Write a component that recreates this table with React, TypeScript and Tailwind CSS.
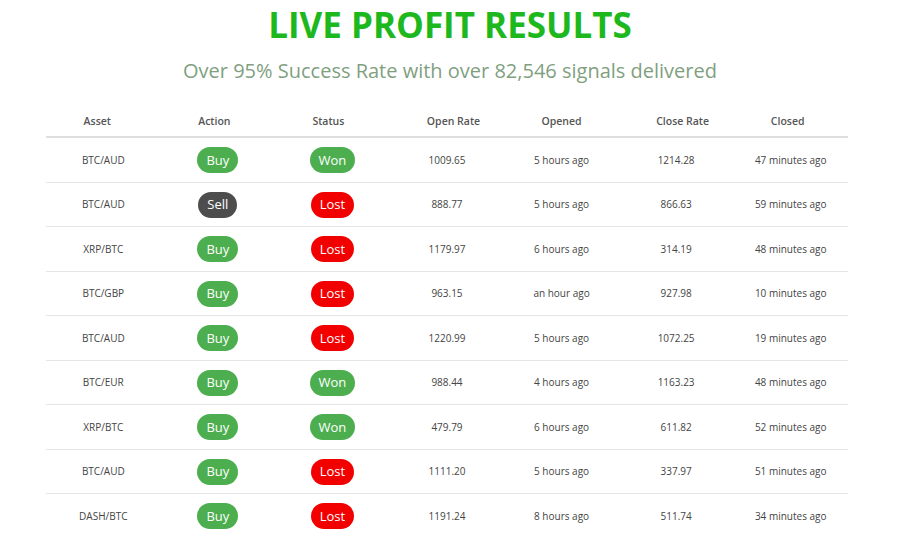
import React from "react";

type Row = [string, "Buy" | "Sell", "Won" | "Lost", string, string, string, string];

const rows: Row[] = [
  ["BTC/AUD", "Buy", "Won", "1009.65", "5 hours ago", "1214.28", "47 minutes ago"],
  ["BTC/AUD", "Sell", "Lost", "888.77", "5 hours ago", "866.63", "59 minutes ago"],
  ["XRP/BTC", "Buy", "Lost", "1179.97", "6 hours ago", "314.19", "48 minutes ago"],
  ["BTC/GBP", "Buy", "Lost", "963.15", "an hour ago", "927.98", "10 minutes ago"],
  ["BTC/AUD", "Buy", "Lost", "1220.99", "5 hours ago", "1072.25", "19 minutes ago"],
  ["BTC/EUR", "Buy", "Won", "988.44", "4 hours ago", "1163.23", "48 minutes ago"],
  ["XRP/BTC", "Buy", "Won", "479.79", "6 hours ago", "611.82", "52 minutes ago"],
  ["BTC/AUD", "Buy", "Lost", "1111.20", "5 hours ago", "337.97", "51 minutes ago"],
  ["DASH/BTC", "Buy", "Lost", "1191.24", "8 hours ago", "511.74", "34 minutes ago"],
];

function Pill({ label }: { label: string }) {
  const color =
    label === "Sell"
      ? "bg-[#4d4d4d]"
      : label === "Lost"
      ? "bg-[#f20000]"
      : "bg-[#4cae4f]";
  return (
    <span
      className={`${color} inline-flex h-[26px] items-center rounded-full px-[9px] text-[13px] leading-none text-white`}
    >
      {label}
    </span>
  );
}

export default function App() {
  return (
    <div className="h-[533px] w-[900px] overflow-hidden bg-white font-['Open_Sans',sans-serif]">
      <h1 className="pt-[3px] text-center text-[35px] font-bold leading-[44px] text-[#1db81d]">
        LIVE PROFIT RESULTS
      </h1>
      <p className="mt-[10px] text-center text-[20px] leading-[28px] text-[#7f9f7f]">
        Over 95% Success Rate with over 82,546 signals delivered
      </p>
      <div className="ml-[46px] mr-[52px] mt-[21px]">
        <div className="grid h-[32px] grid-cols-7 items-center border-b-2 border-[#dedede] pt-[2px] text-[10.5px] font-semibold text-[#555]">
          <div className="pr-[12px] text-center">Asset</div>
          <div className="pr-[7px] text-center">Action</div>
          <div className="pr-[8px] text-center">Status</div>
          <div className="pl-[13px] text-center">Open Rate</div>
          <div className="text-center">Opened</div>
          <div className="pl-[13px] text-center">Close Rate</div>
          <div className="pr-[6px] text-center">Closed</div>
        </div>
        {rows.map((r, i) => (
          <div
            key={i}
            className="grid h-[44.5px] grid-cols-7 items-center border-b border-[#e6e6e6] pt-[1px] text-[10px] text-[#444]"
          >
            <div className="text-center">{r[0]}</div>
            <div className="flex justify-center">
              <Pill label={r[1]} />
            </div>
            <div className="flex justify-center">
              <Pill label={r[2]} />
            </div>
            <div className="text-center">{r[3]}</div>
            <div className="text-center">{r[4]}</div>
            <div className="text-center">{r[5]}</div>
            <div className="text-center">{r[6]}</div>
          </div>
        ))}
      </div>
    </div>
  );
}
